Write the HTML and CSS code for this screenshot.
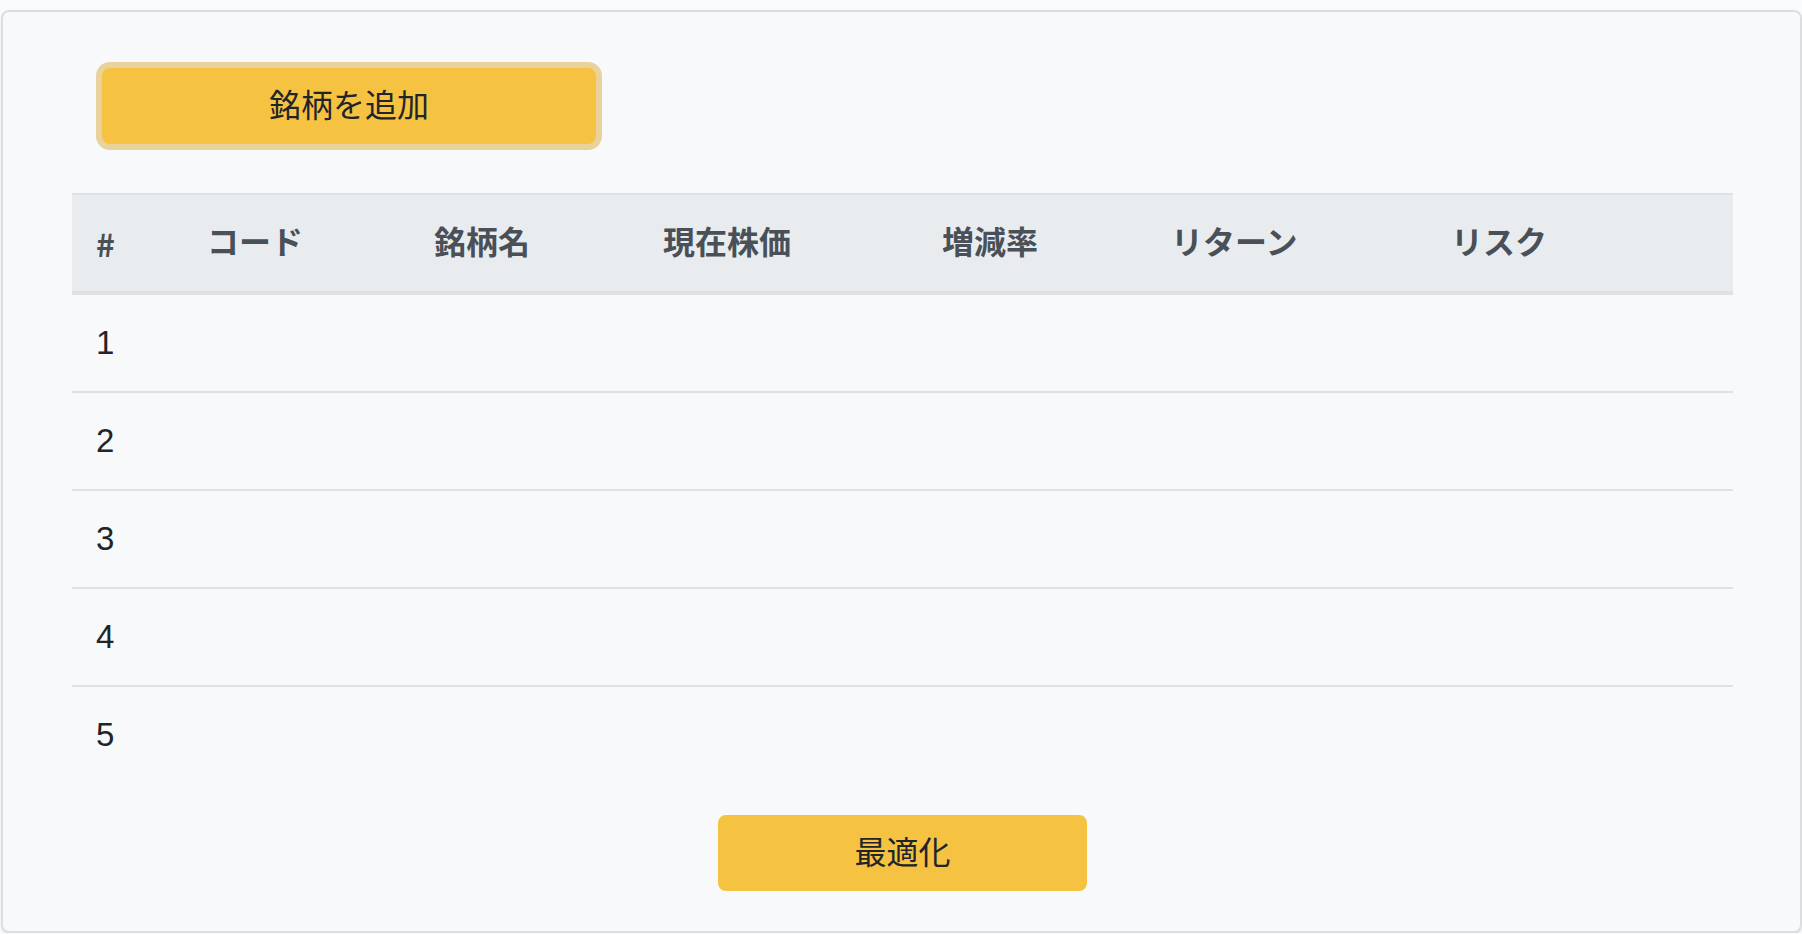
FILE: index.html
```html
<!DOCTYPE html>
<html lang="ja">
<head>
<meta charset="utf-8">
<title>ポートフォリオ</title>
<link rel="stylesheet" href="styles.css">
</head>
<body>
<div class="card">
  <div class="toolbar">
    <button class="btn btn-add">銘柄を追加</button>
  </div>
  <table class="stocks">
    <thead>
      <tr>
        <th class="c-no">#</th>
        <th class="c-code">コード</th>
        <th class="c-name">銘柄名</th>
        <th class="c-price">現在株価</th>
        <th class="c-rate">増減率</th>
        <th class="c-ret">リターン</th>
        <th class="c-risk">リスク</th>
      </tr>
    </thead>
    <tbody>
      <tr><td>1</td><td></td><td></td><td></td><td></td><td></td><td></td></tr>
      <tr><td>2</td><td></td><td></td><td></td><td></td><td></td><td></td></tr>
      <tr><td>3</td><td></td><td></td><td></td><td></td><td></td><td></td></tr>
      <tr><td>4</td><td></td><td></td><td></td><td></td><td></td><td></td></tr>
      <tr><td>5</td><td></td><td></td><td></td><td></td><td></td><td></td></tr>
    </tbody>
  </table>
  <div class="footer">
    <button class="btn btn-opt">最適化</button>
  </div>
</div>
</body>
</html>
```
FILE: styles.css
```css
html, body {
  margin: 0;
  padding: 0;
}
body {
  background: #f9fafc;
  padding-top: 10px;
  font-family: "Liberation Sans", "Noto Sans CJK JP", sans-serif;
  color: #212529;
  font-size: 32px;
  line-height: 48px;
}
.card {
  margin-left: 1px;
  box-sizing: border-box;
  width: calc(100% - 1px);
  background: #f8f9fa;
  border: 2px solid #dcdde0;
  border-radius: 8px;
  padding: 56px 67px 40px 69px;
  box-shadow: 0 2px 2px rgba(0, 0, 0, 0.08);
}
.toolbar {
  display: flex;
  padding-left: 30px;
  margin-bottom: 49px;
}
.btn {
  font-family: "Liberation Sans", "Noto Sans CJK JP", sans-serif;
  font-size: 32px;
  line-height: 48px;
  padding: 12px 24px;
  border: 2px solid #f5c242;
  border-radius: 8px;
  background: #f5c242;
  color: #212529;
  box-sizing: border-box;
  cursor: pointer;
}
.btn-add {
  width: 494px;
  box-shadow: 0 0 0 6px #e9d29c;
  outline: none;
}
.btn-opt {
  width: 369px;
}
.stocks {
  width: 100%;
  border-collapse: separate;
  border-spacing: 0;
}
.stocks th {
  box-sizing: border-box;
  text-align: left;
  font-weight: bold;
  color: #495057;
  background: #e9ecef;
  border-top: 2px solid #dee2e6;
  border-bottom: 4px solid #dee2e6;
  padding: 24px;
  white-space: nowrap;
}
.stocks th.c-no {
  font-family: "Noto Sans CJK JP", sans-serif;
}
.stocks td {
  padding: 24px;
  border-top: 2px solid #dee2e6;
  color: #212529;
  font-size: 33px;
}
.stocks tbody tr:first-child td {
  border-top: none;
}
.c-no { width: 111px; }
.c-code { width: 227px; }
.c-name { width: 229px; }
.c-price { width: 279px; }
.c-rate { width: 229px; }
.c-ret { width: 280px; }
.footer {
  display: flex;
  justify-content: center;
  margin-top: 32px;
}
```
